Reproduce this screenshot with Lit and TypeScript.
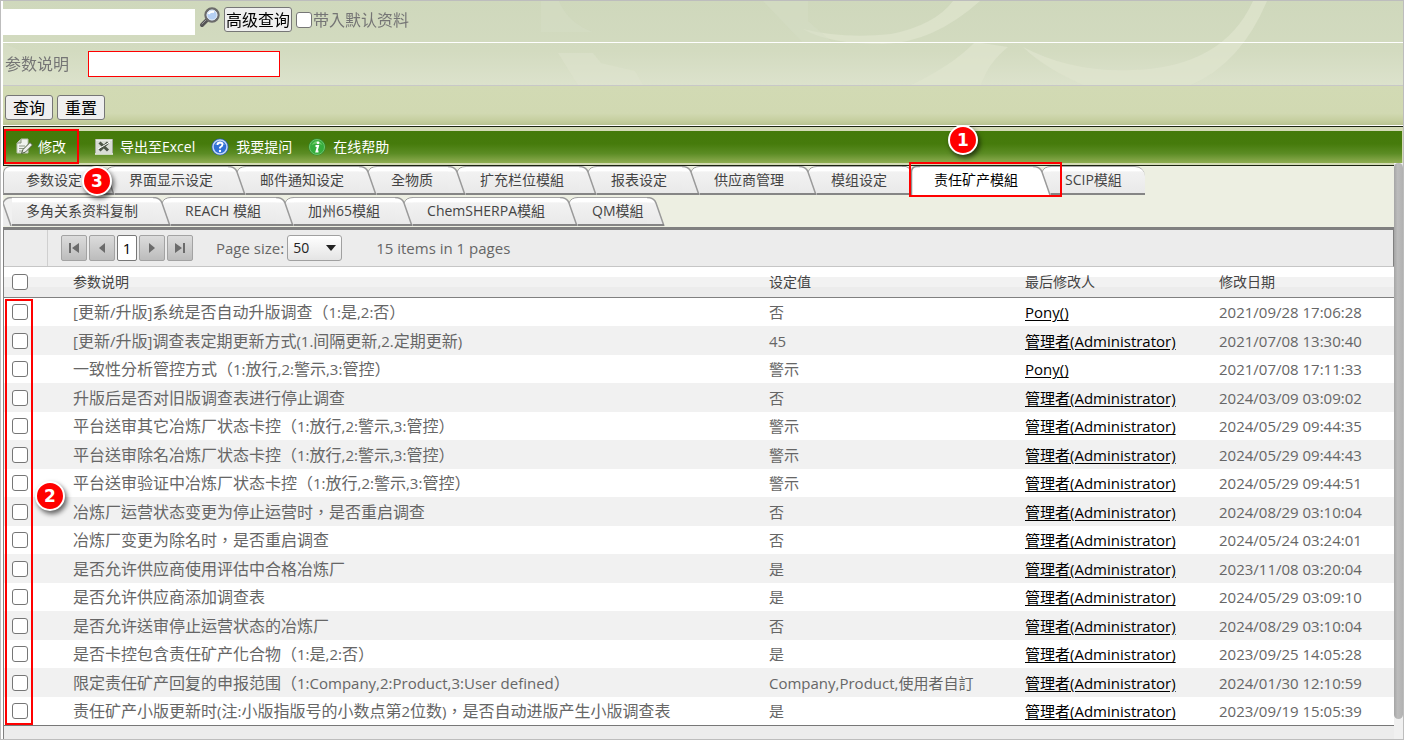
import { LitElement, html, svg, css } from "lit";
import { customElement, state } from "lit/decorators.js";
import { classMap } from "lit/directives/class-map.js";

interface Row {
  text: string;
  value: string;
  user: string;
  date: string;
}

const ADMIN = "管理者(Administrator)";

const ROWS: Row[] = [
  { text: "[更新/升版]系统是否自动升版调查（1:是,2:否）", value: "否", user: "Pony()", date: "2021/09/28 17:06:28" },
  { text: "[更新/升版]调查表定期更新方式(1.间隔更新,2.定期更新)", value: "45", user: ADMIN, date: "2021/07/08 13:30:40" },
  { text: "一致性分析管控方式（1:放行,2:警示,3:管控）", value: "警示", user: "Pony()", date: "2021/07/08 17:11:33" },
  { text: "升版后是否对旧版调查表进行停止调查", value: "否", user: ADMIN, date: "2024/03/09 03:09:02" },
  { text: "平台送审其它冶炼厂状态卡控（1:放行,2:警示,3:管控）", value: "警示", user: ADMIN, date: "2024/05/29 09:44:35" },
  { text: "平台送审除名冶炼厂状态卡控（1:放行,2:警示,3:管控）", value: "警示", user: ADMIN, date: "2024/05/29 09:44:43" },
  { text: "平台送审验证中冶炼厂状态卡控（1:放行,2:警示,3:管控）", value: "警示", user: ADMIN, date: "2024/05/29 09:44:51" },
  { text: "冶炼厂运营状态变更为停止运营时，是否重启调查", value: "否", user: ADMIN, date: "2024/08/29 03:10:04" },
  { text: "冶炼厂变更为除名时，是否重启调查", value: "否", user: ADMIN, date: "2024/05/24 03:24:01" },
  { text: "是否允许供应商使用评估中合格冶炼厂", value: "是", user: ADMIN, date: "2023/11/08 03:20:04" },
  { text: "是否允许供应商添加调查表", value: "是", user: ADMIN, date: "2024/05/29 03:09:10" },
  { text: "是否允许送审停止运营状态的冶炼厂", value: "否", user: ADMIN, date: "2024/08/29 03:10:04" },
  { text: "是否卡控包含责任矿产化合物（1:是,2:否）", value: "是", user: ADMIN, date: "2023/09/25 14:05:28" },
  { text: "限定责任矿产回复的申报范围（1:Company,2:Product,3:User defined）", value: "Company,Product,使用者自訂", user: ADMIN, date: "2024/01/30 12:10:59" },
  { text: "责任矿产小版更新时(注:小版指版号的小数点第2位数)，是否自动进版产生小版调查表", value: "是", user: ADMIN, date: "2023/09/19 15:05:39" },
];

const TABS_TOP = ["参数设定", "界面显示设定", "邮件通知设定", "全物质", "扩充栏位模組", "报表设定", "供应商管理", "模组设定", "责任矿产模組", "SCIP模組"];
const TABS_BOTTOM = ["多角关系资料复制", "REACH 模組", "加州65模組", "ChemSHERPA模組", "QM模組"];

@customElement("search-panel")
export class SearchPanel extends LitElement {
  static styles = css`
    :host { display: block; color: #757575; font-size: 16px; line-height: 24px; }
    .stack { display: grid; }
    .art, .rows { grid-area: 1 / 1; min-width: 0; }
    .art { width: 100%; height: 100%; display: block; }
    .rows { display: grid; grid-template-rows: 42px 42px; }
    .line { display: flex; align-items: center; box-sizing: border-box; }
    .quick { border-bottom: 1px solid #fff; padding-bottom: 4px; }
    .field { padding-left: 2px; gap: 18px; }
    .text { box-sizing: border-box; width: 192px; height: 26px; border: 0; background: #fff; border-radius: 0; padding: 0 4px; font: inherit; }
    .quick .text { margin-top: 5px; }
    .lens { width: 22px; height: 22px; margin-left: 4px; margin-top: -4px; }
    .btn { box-sizing: border-box; height: 25px; border: 1px solid #767676; border-radius: 3px; background: #efefef; color: #000; font: inherit; line-height: 22px; padding: 0; width: 48px; }
    .wide { width: 68px; margin-left: 3px; }
    .check { display: flex; align-items: center; margin-left: 4px; gap: 1px; }
    input[type="checkbox"] { appearance: none; width: 16px; height: 16px; margin: 0; box-sizing: border-box; border: 1px solid #767676; border-radius: 3px; background: #fff; }
    .framed { border: 1px solid #f00; margin-left: 1px; }
    .actions { border-top: 1px solid #c8c8c8; display: flex; gap: 4px; padding: 9px 2px 5px; background: linear-gradient(#d2dab4 0, #d1d9b2 70%, #c6cfa0 88%, #b9c392 100%); }
  `;

  render() {
    return html`
      <div class="stack">
        <svg class="art" viewBox="0 0 1400 84" preserveAspectRatio="none" aria-hidden="true">
          <defs>
            <linearGradient id="sky" x1="0" y1="0" x2="0" y2="1">
              <stop offset="0" stop-color="#cfd8bc" />
              <stop offset=".6" stop-color="#d3dbc0" />
              <stop offset="1" stop-color="#dce2cc" />
            </linearGradient>
          </defs>
          <rect width="1400" height="84" fill="url(#sky)" />
          <g fill="#dfe4ce" opacity=".75">
            <path d="M800 28 Q840 38 888 33 Q932 24 950 0 H977 Q930 42 880 43 Q825 43 800 28Z" />
            <path d="M908 84 Q950 64 972 41 L1005 46 Q985 62 978 84Z" />
            <path d="M1020 46 Q1070 72 1130 69 Q1220 66 1250 0 H1264 Q1238 62 1188 84 H1080 Q1040 66 1020 46Z" />
            <path d="M555 52 H590 L598 62 L632 70 L640 84 H575Z" opacity=".6" />
            <path d="M0 42 L18 50 L36 70 L62 84 H0Z" opacity=".4" />
          </g>
          <path d="M538 0 H556 Q565 22 590 31 H538Z M760 0 H805 V20 L830 42 H800Z" fill="#d6ddc5" opacity=".5" />
        </svg>
        <div class="rows">
          <div class="line quick">
            <input class="text" aria-label="快速查询" />
            <svg class="lens" viewBox="0 0 22 22" aria-hidden="true">
              <path d="M8 13 L3 18" stroke="#555" stroke-width="4" stroke-linecap="round" />
              <path d="M7 13 L3 17" stroke="#999" stroke-width="1" stroke-linecap="round" />
              <circle cx="13" cy="8" r="6.500" fill="#b5cff3" stroke="#6b6b6b" stroke-width="2.400" />
              <circle cx="13" cy="8" r="5" fill="none" stroke="#e4ecf7" />
              <path d="M9.500 7 Q11 4 15 5" stroke="#fff" stroke-width="2" fill="none" />
            </svg>
            <button class="btn wide">高级查询</button>
            <label class="check"><input type="checkbox" />带入默认资料</label>
          </div>
          <div class="line field">
            <label for="desc">参数说明</label>
            <input class="text framed" id="desc" />
          </div>
        </div>
      </div>
      <div class="actions">
        <button class="btn">查询</button>
        <button class="btn">重置</button>
      </div>
    `;
  }
}

@customElement("tool-bar")
export class ToolBar extends LitElement {
  static styles = css`
    :host { display: block; border: 1px solid #1c2412; border-right: 0; background: #d3dab5; padding: 4px 1px 2px 0; margin-top: 1px; }
    .bar { height: 32px; display: flex; align-items: center; padding-left: 11px; background: linear-gradient(#447a0a 0, #467b0c 40%, #5b8c24 70%, #8fad52 100%); gap: 15px; }
    button { display: flex; align-items: center; gap: 6px; height: 28px; padding: 0; border: 0; background: none; color: #fff; font: inherit; font-size: 14px; line-height: 20px; white-space: nowrap; }
    .lead { gap: 3px; margin-right: 13px; }
    svg { width: 20px; height: 20px; display: block; }
  `;

  render() {
    return html`
      <div class="bar">
        <button class="lead">
          <svg viewBox="0 0 20 20" aria-hidden="true">
            <path d="M6 2 H13 V16 H2 V6Z" fill="#f0f2ee" stroke="#b9c2ae" />
            <path d="M2 6 H6 V2" fill="#cdd3c8" stroke="#87917c" />
            <path d="M4 9 H10 M4 11.500 H9 M4 14 H7" stroke="#8e9786" />
            <path d="M6.500 16.500 L8 12.500 L15 5.500 L17.500 8 L10.500 15Z" fill="#efefef" stroke="#4b5c3a" />
          </svg>修改
        </button>
        <button>
          <svg viewBox="0 0 20 20" aria-hidden="true">
            <rect x="1.500" y="2.500" width="17" height="14" fill="#d9ddd6" stroke="#9fa996" />
            <path d="M2 3 H18" stroke="#f7f8f6" />
            <path d="M5.500 5.500 L14 13.500 M14 5.500 L5.500 13.500" stroke="#4c5547" stroke-width="3" />
            <path d="M4 12 L16 5" stroke="#fff" />
            <path d="M1 17 H19" stroke="#eef0ec" stroke-width="1.500" />
          </svg>导出至Excel
        </button>
        <button>
          <svg viewBox="0 0 20 20" aria-hidden="true">
            <circle cx="10" cy="10" r="8.500" fill="#2459b5" />
            <circle cx="10" cy="10" r="7" fill="#2f6fd6" stroke="#c3d8f5" stroke-width="1.500" />
            <path d="M4.500 8 Q10 1 15.500 8 Q10 6 4.500 8Z" fill="#8db5f1" opacity=".7" />
            <path d="M7.500 8 Q7.500 5.500 10 5.500 Q12.500 5.500 12.500 7.500 Q12.500 9 10 10.500 V11.500" fill="none" stroke="#fff" stroke-width="1.800" />
            <circle cx="10" cy="14" r="1.200" fill="#fff" />
          </svg>我要提问
        </button>
        <button>
          <svg viewBox="0 0 20 20" aria-hidden="true">
            <circle cx="10" cy="10" r="8.500" fill="#2c8a35" />
            <circle cx="10" cy="10" r="7.500" fill="#35ad3d" stroke="#6cc46a" />
            <path d="M4.500 8 Q10 0 15.500 8 Q10 5 4.500 8Z" fill="#8fdc86" opacity=".6" />
            <circle cx="11" cy="5.800" r="1.400" fill="#fff" />
            <path d="M8.500 9 H11 L9.500 14.500 H11.500" fill="none" stroke="#fff" stroke-width="2" />
          </svg>在线帮助
        </button>
      </div>
    `;
  }
}

@customElement("tab-strip")
export class TabStrip extends LitElement {
  @state() private selected = "责任矿产模組";

  static styles = css`
    :host { display: block; background: #edefe2; padding-bottom: 1px; }
    .strip { display: flex; height: 29px; }
    .strip + .strip { margin-top: 2px; }
    .tab { display: flex; padding: 0; border: 0; background: none; color: #444; font: inherit; font-size: 14px; line-height: 26px; white-space: nowrap; }
    .label { box-sizing: border-box; height: 29px; padding: 0 15px 0 14px; border-top: 1px solid #a6a6a6; border-bottom: 2px solid #858585; background: linear-gradient(#fff 0, #fff 16%, #f2f2f2 18%, #e9e9e9 100%); }
    .first .label { border-left: 1px solid #999; border-top-left-radius: 7px; padding-left: 22px; }
    .slanted .label { border-left: 0; border-top-left-radius: 0; padding-left: 14px; }
    .on .label { background: #fff; border-bottom-color: #fff; color: #000; }
    .cut .label { border-top-right-radius: 10px; padding-right: 23px; }
    .slanted.end .label { padding-right: 4px; }
    svg { width: 18px; height: 29px; display: block; }
    .lead { width: 9px; }
  `;

  private edge(left: string, right: string, last: boolean) {
    const fill = (on: boolean) => (on ? "#fff" : "url(#g)");
    const l = left === this.selected;
    const r = right === this.selected;
    return html`
      <svg viewBox="0 0 18 29" aria-hidden="true">
        <defs>
          <linearGradient id="g" gradientUnits="userSpaceOnUse" x1="0" y1="0" x2="0" y2="29">
            <stop offset="0" stop-color="#fff" />
            <stop offset=".18" stop-color="#fff" />
            <stop offset=".2" stop-color="#f2f2f2" />
            <stop offset="1" stop-color="#e9e9e9" />
          </linearGradient>
        </defs>
        ${last || r
          ? null
          : svg`<path d="M9 6 Q11 .5 18 .5 V29 H17Z" fill=${fill(false)} /><path d="M9 6 Q11 .5 18 .5 M17 28 H18" fill="none" stroke="#9d9d9d" />`}
        ${r
          ? svg`<path d="M0 0 H5 L9 5 V29 H0Z" fill=${fill(false)} /><path d="M9 29 V6 Q9 .5 14 .5 H18 V29Z" fill="#fff" /><path d="M0 .5 H4 Q7 1 9 5" fill="none" stroke="#929292" /><path d="M0 28 H9" stroke="#858585" stroke-width="2" /><path d="M9.500 29 V6 Q9.500 .5 15 .5 H18" fill="none" stroke="#8f8f8f" stroke-width="1.500" />`
          : svg`<path d="M0 .5 Q7 .5 9 6 L17 29 H0Z" fill=${fill(l)} /><path d="M0 .5 Q7 .5 9 6 L17 29" fill="none" stroke="#9a9a9a" stroke-width="1.500" />`}
        ${l || r ? null : svg`<path d="M0 28 H17" stroke="#858585" stroke-width="2" />`}
      </svg>
    `;
  }

  private strip(tabs: string[], slanted: boolean) {
    return html`
      <div class="strip" role="tablist">
        ${slanted
          ? html`<svg class="lead" viewBox="9 0 9 29" aria-hidden="true">
              <path d="M9 6 Q11 .5 18 .5 V29 H17Z" fill="#f1f1f1" />
              <path d="M9 0 Q8 3 9 6 L17 29 H9Z" fill="#ececec" />
              <path d="M18 .5 Q11 .5 9 6 L17 29" fill="none" stroke="#9a9a9a" stroke-width="1.500" />
            </svg>`
          : null}
        ${tabs.map((name, i) => {
          const end = i === tabs.length - 1;
          const cut = end && !slanted;
          return html`<button
            role="tab"
            aria-selected=${name === this.selected}
            class=${classMap({ tab: true, first: i === 0, slanted, end, on: name === this.selected, cut })}
            @click=${() => (this.selected = name)}
          ><span class="label">${name}</span>${cut ? null : this.edge(name, tabs[i + 1] ?? "", end)}</button>`;
        })}
      </div>
    `;
  }

  render() {
    return html`${this.strip(TABS_TOP, false)}${this.strip(TABS_BOTTOM, true)}`;
  }
}

@customElement("param-grid")
export class ParamGrid extends LitElement {
  static styles = css`
    :host { display: block; border-top: 3px solid #808080; border-left: 1px solid #808080; background: #ececec; color: #666; flex: 1; }
    .pager { display: flex; align-items: center; height: 36px; border-bottom: 1px solid #c6c6c6; border-right: 1px solid #808080; font-size: 16px; line-height: 24px; }
    .gutter { width: 43px; align-self: stretch; border-right: 1px solid #cfcfcf; margin-right: 13px; }
    .nav { display: flex; gap: 2px; margin-right: 23px; }
    .step { box-sizing: border-box; width: 26px; height: 26px; padding: 0; border: 1px solid #a3a3a3; border-radius: 2px; background: linear-gradient(#dcdcdc, #bcbcbc); display: grid; place-items: center; }
    .step svg { width: 14px; height: 14px; }
    .page { width: 20px; background: #fff; border-color: #777; color: #000; font: inherit; font-size: 15px; line-height: 22px; }
    .size { display: flex; align-items: center; gap: 3px; font-size: 15px; }
    .pick { display: grid; }
    .pick select, .pick svg { grid-area: 1 / 1; }
    .pick select { appearance: none; box-sizing: border-box; width: 55px; height: 26px; border: 1px solid #a0a0a0; border-radius: 3px; background: linear-gradient(#fff, #e4e4e4); color: #222; font: inherit; font-size: 14px; padding: 0 5px; }
    .pick svg { width: 10px; height: 6px; place-self: center end; margin-right: 6px; pointer-events: none; }
    .total { margin-left: 34px; font-size: 15px; }
    table { width: 100%; border-collapse: collapse; table-layout: fixed; }
    th, td { padding: 0 0 0 10px; text-align: left; font-weight: 400; white-space: nowrap; line-height: 24px; }
    th { height: 30px; color: #444; font-size: 14px; }
    thead tr { background: linear-gradient(#fff 0, #fff 33%, #f2f2f2 33%, #f2f2f2 66%, #ececec 66%); border-bottom: 1px solid #808080; }
    td { height: 28px; font-size: 15px; }
    td.name { font-size: 16px; }
    .latin { font-size: 15px; }
    tbody tr { background: #fff; }
    tbody tr:nth-child(even) { background: #f1f1f1; }
    tbody tr:nth-child(even) td { height: 29px; }
    tbody { border-bottom: 1px solid #777; }
    .pick-col { width: 59px; }
    .value-col { width: 256px; }
    .user-col { width: 194px; }
    .date-col { width: 185px; }
    th:first-child, td:first-child { padding-left: 8px; }
    a { color: #000; text-underline-offset: 2px; }
    input { appearance: none; display: block; box-sizing: border-box; width: 16px; height: 16px; margin: 0; border: 1px solid #767676; border-radius: 3px; background: #fff; }
  `;

  private step(label: string, path: string) {
    return html`<button class="step" aria-label=${label}>
      <svg viewBox="0 0 14 14" aria-hidden="true"><path d=${path} fill="#6b6b6b" /></svg>
    </button>`;
  }

  // Latin runs are set one size smaller so that they sit evenly beside the Chinese glyphs.
  private mixed(text: string) {
    return text
      .split(/([\x20-\x7e]+)/)
      .map((part, i) => (i % 2 ? html`<span class="latin">${part}</span>` : part));
  }

  render() {
    return html`
      <div class="pager">
        <div class="gutter"></div>
        <div class="nav">
          ${this.step("First", "M2 2 H4 V12 H2Z M12 2 V12 L5 7Z")}
          ${this.step("Previous", "M10 2 V12 L4 7Z")}
          <button class="step page">1</button>
          ${this.step("Next", "M4 2 V12 L10 7Z")}
          ${this.step("Last", "M2 2 V12 L9 7Z M10 2 H12 V12 H10Z")}
        </div>
        <label class="size">Page size:
          <span class="pick">
            <select><option>50</option></select>
            <svg viewBox="0 0 10 6" aria-hidden="true"><path d="M0 0 H10 L5 6Z" fill="#222" /></svg>
          </span>
        </label>
        <span class="total">15 items in 1 pages</span>
      </div>
      <table>
        <colgroup>
          <col class="pick-col" />
          <col />
          <col class="value-col" />
          <col class="user-col" />
          <col class="date-col" />
        </colgroup>
        <thead>
          <tr>
            <th><input type="checkbox" aria-label="全选" /></th>
            <th>参数说明</th>
            <th>设定值</th>
            <th>最后修改人</th>
            <th>修改日期</th>
          </tr>
        </thead>
        <tbody>
          ${ROWS.map(
            (r) => html`<tr>
              <td><input type="checkbox" aria-label=${r.text} /></td>
              <td class="name">${this.mixed(r.text)}</td>
              <td>${r.value}</td>
              <td><a href="#">${r.user}</a></td>
              <td>${r.date}</td>
            </tr>`
          )}
        </tbody>
      </table>
    `;
  }
}

@customElement("app-root")
export class AppRoot extends LitElement {
  static styles = css`
    :host { display: flex; flex-direction: column; position: relative; box-sizing: border-box; min-height: 100vh; border: 1px solid #bdbdbd; padding-left: 2px; background: #fff; font-family: "Open Sans", "Noto Sans CJK TC", "Noto Sans CJK SC", sans-serif; overflow: hidden; }
    .body { display: flex; flex: 1; }
    .main { flex: 1; min-width: 0; display: flex; flex-direction: column; }
    .scroll { width: 9px; background: #f0f0f0; padding-bottom: 20px; display: flex; margin-top: -3px; }
    .thumb { flex: 1; border-radius: 5px; background: linear-gradient(90deg, #a5a5a5, #bcbcbc 40%, #b2b2b2); }
    .box { position: absolute; box-sizing: border-box; border: 2px solid #f00; pointer-events: none; }
    .box-edit { left: 3px; top: 128px; width: 75px; height: 35px; }
    .box-tab { left: 908px; top: 161px; width: 153px; height: 35px; }
    .box-rows { left: 4px; top: 298px; width: 28px; height: 426px; }
    .mark { position: absolute; box-sizing: border-box; width: 30px; height: 30px; border: 2px solid #fff; border-radius: 50%; background: #f00; color: #fff; box-shadow: 2px 3px 5px rgba(0, 0, 0, 0.6); font: bold 17px/26px "DejaVu Sans", sans-serif; text-align: center; }
    .mark-tab { left: 947px; top: 124px; }
    .mark-rows { left: 34px; top: 480px; }
    .mark-edit { left: 81px; top: 165px; }
  `;

  render() {
    return html`
      <search-panel></search-panel>
      <tool-bar></tool-bar>
      <div class="body">
        <div class="main">
          <tab-strip></tab-strip>
          <param-grid></param-grid>
        </div>
        <div class="scroll"><div class="thumb"></div></div>
      </div>
      <div class="box box-edit"></div>
      <div class="box box-tab"></div>
      <div class="box box-rows"></div>
      <span class="mark mark-tab">1</span>
      <span class="mark mark-rows">2</span>
      <span class="mark mark-edit">3</span>
    `;
  }
}
